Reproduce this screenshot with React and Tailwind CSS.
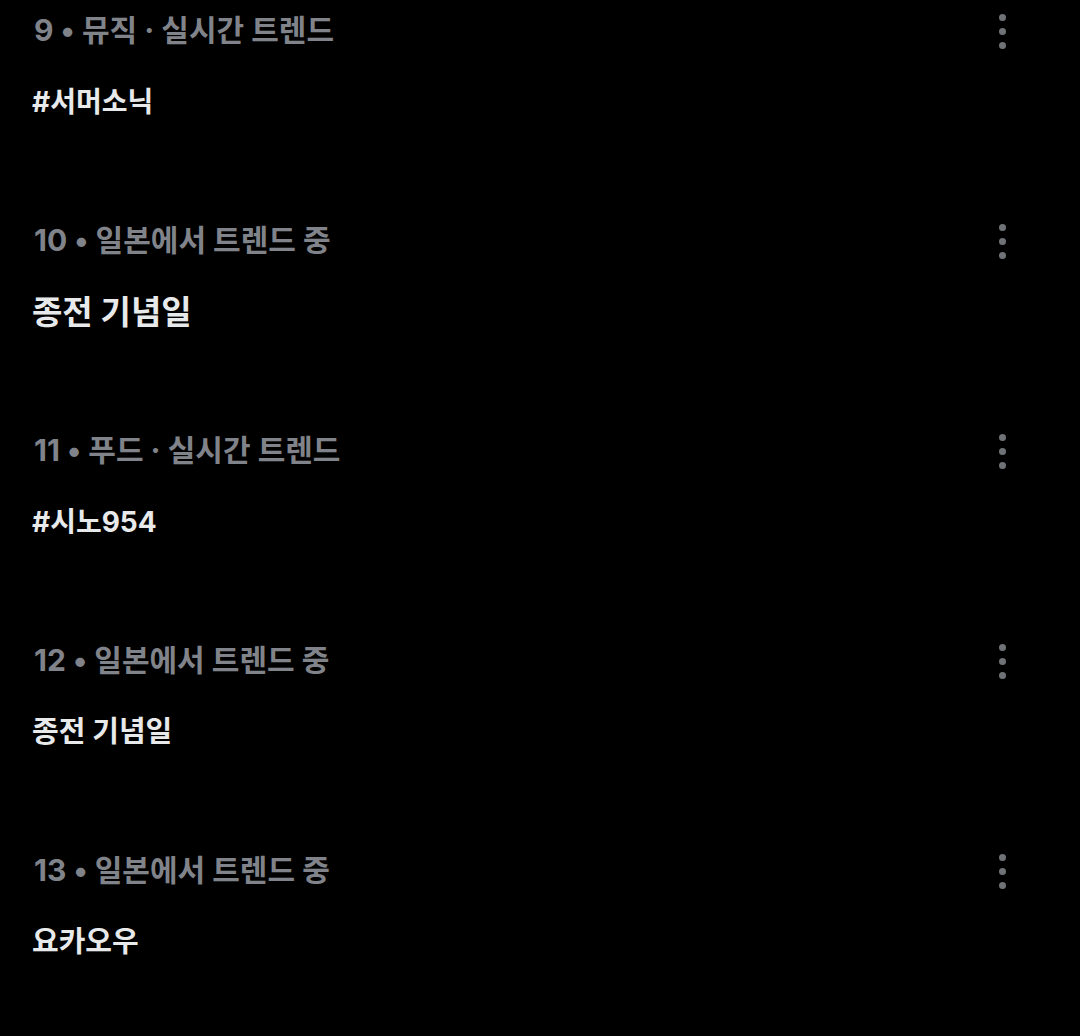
import React from 'react'

const trends = [
  { rank: 9, meta: '뮤직 · 실시간 트렌드', title: '#서머소닉', size: 'text-[28px]' },
  { rank: 10, meta: '일본에서 트렌드 중', title: '종전 기념일', size: 'text-[33px]' },
  { rank: 11, meta: '푸드 · 실시간 트렌드', title: '#시노954', size: 'text-[28px]' },
  { rank: 12, meta: '일본에서 트렌드 중', title: '종전 기념일', size: 'text-[29px]' },
  { rank: 13, meta: '일본에서 트렌드 중', title: '요카오우', size: 'text-[29px]' },
]

function MoreDots() {
  return (
    <div className="flex flex-col items-center gap-[7px] pt-[14px] pr-[74px]">
      <span className="w-[7px] h-[7px] rounded-full bg-[#6f7378]" />
      <span className="w-[7px] h-[7px] rounded-full bg-[#6f7378]" />
      <span className="w-[7px] h-[7px] rounded-full bg-[#6f7378]" />
    </div>
  )
}

function TrendItem({ rank, meta, title, size }) {
  return (
    <div className="flex justify-between h-[210px]">
      <div className="pt-[10px]">
        <div className="text-[30px] leading-[40px] font-bold text-[#80848a]">
          {rank} • {meta}
        </div>
        <div className={`${size} mt-[32px] leading-[40px] font-bold text-[#e7e9ea] -ml-[2px]`}>
          {title}
        </div>
      </div>
      <MoreDots />
    </div>
  )
}

export default function App() {
  return (
    <div
      className="min-h-screen bg-black pl-[34px]"
      style={{ fontFamily: 'Inter, "Noto Sans CJK KR", sans-serif' }}
    >
      {trends.map(t => (
        <TrendItem key={t.rank} {...t} />
      ))}
    </div>
  )
}
